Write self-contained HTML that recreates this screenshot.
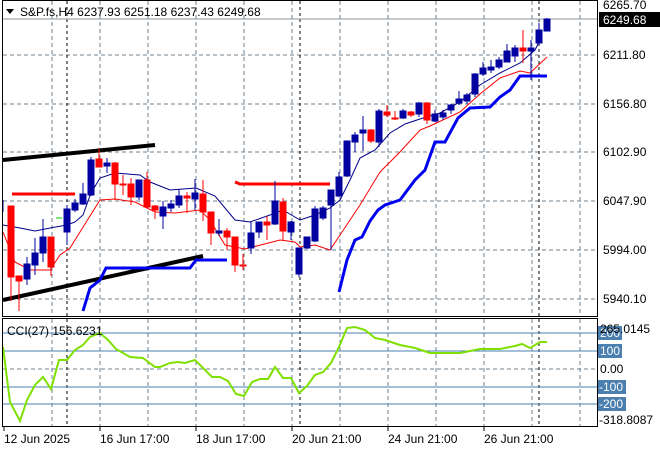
<!DOCTYPE html>
<html><head><meta charset="utf-8"><style>
html,body{margin:0;padding:0;background:#fff;width:660px;height:450px;overflow:hidden}
svg{display:block;font-family:"Liberation Sans","DejaVu Sans",sans-serif}
</style></head><body>
<svg width="660" height="450" viewBox="0 0 660 450" xmlns="http://www.w3.org/2000/svg">
<rect width="660" height="450" fill="#fff"/>
<g stroke="#6f7f8f" stroke-width="1" stroke-dasharray="4,3" fill="none">
<path d="M52,1V316M100,1V316M148,1V316M196,1V316M244,1V316M292,1V316M340,1V316M388,1V316M436,1V316M484,1V316M532,1V316M580,1V316"/>
<path d="M52,319V426M100,319V426M148,319V426M196,319V426M244,319V426M292,319V426M340,319V426M388,319V426M436,319V426M484,319V426M532,319V426M580,319V426"/>
<path d="M3,55H597M3,104H597M3,152H597M3,201H597M3,250H597M3,299H597M3,369H597"/>
</g>
<g stroke="#000" stroke-width="1" stroke-dasharray="3,3" fill="none">
<path d="M67,1V316M300,1V316M539,1V316M67,319V426M300,319V426M539,319V426"/>
</g>
<line x1="3" y1="19" x2="597" y2="19" stroke="#8a949e"/>
<path d="M3,333H597M3,351H597M3,387H597M3,404H597" stroke="#4a7fb0" fill="none"/>
<g stroke="#000" stroke-width="4"><line x1="3" y1="160" x2="155" y2="145"/><line x1="3" y1="300" x2="203" y2="256"/></g>
<g stroke="#f00" stroke-width="3" fill="none"><line x1="12" y1="194" x2="75" y2="194"/><polyline points="235,182 240,184 330,184"/></g>
<g stroke="#0000f0" stroke-width="3" fill="none">
<polyline points="83,311 90,288 100,280 106,268 190,268 196,260 227,260"/>
<polyline points="339,292 347,260 355,240 362,237 370,221 378,210 385,205 400,200 415,180 425,170 435,142 445,142 458,118 470,108 490,107 500,97 510,90 520,76 547,76"/>
</g>
<polyline fill="none" stroke="#00008b" stroke-width="1" points="3,225 20,228 35,231 50,228 67,225 75,222 83,215 91,193 100,178 115,173 140,175 150,182 170,190 196,188 215,196 235,220 250,222 270,215 283,210 300,220 315,215 330,208 340,200 350,180 360,158 375,150 390,133 405,124 420,119 440,113 460,102 480,85 500,73 520,63 535,50 541,38"/>
<polyline fill="none" stroke="#f00" stroke-width="1" points="3,232 15,262 30,270 50,270 60,255 70,248 80,232 100,200 115,199 135,202 155,212 175,213 200,210 210,220 225,245 245,249 280,240 295,242 300,247 315,245 330,250 340,235 360,205 380,172 400,152 420,130 430,126 460,112 480,94 500,78 520,71 530,73 547,57"/>
<line x1="56" y1="218" x2="62" y2="218" stroke="#0c0"/>
<g stroke="#f00" fill="#f00">
<line x1="11" y1="206" x2="11" y2="301"/><rect x="8" y="206" width="6" height="71"/>
<line x1="19" y1="276" x2="19" y2="311"/><rect x="16" y="276" width="6" height="5"/>
<line x1="51" y1="237" x2="51" y2="276"/><rect x="48" y="237" width="6" height="30"/>
<line x1="99" y1="148" x2="99" y2="167"/><rect x="96" y="159" width="6" height="8"/>
<line x1="115" y1="162" x2="115" y2="200"/><rect x="112" y="163" width="6" height="21"/>
<line x1="123" y1="175" x2="123" y2="195"/><rect x="120" y="184" width="6" height="1"/>
<line x1="131" y1="178" x2="131" y2="205"/><rect x="128" y="184" width="6" height="13"/>
<line x1="147" y1="172" x2="147" y2="208"/><rect x="144" y="180" width="6" height="27"/>
<line x1="155" y1="205" x2="155" y2="219"/><rect x="152" y="206" width="6" height="4"/>
<line x1="187" y1="192" x2="187" y2="213"/><rect x="184" y="196" width="6" height="2"/>
<line x1="203" y1="180" x2="203" y2="221"/><rect x="200" y="194" width="6" height="18"/>
<line x1="211" y1="212" x2="211" y2="245"/><rect x="208" y="212" width="6" height="21"/>
<line x1="227" y1="228" x2="227" y2="250"/><rect x="224" y="231" width="6" height="6"/>
<line x1="235" y1="237" x2="235" y2="272"/><rect x="232" y="237" width="6" height="28"/>
<line x1="243" y1="254" x2="243" y2="270"/><rect x="240" y="265" width="6" height="1"/>
<line x1="267" y1="216" x2="267" y2="240"/><rect x="264" y="222" width="6" height="3"/>
<line x1="283" y1="198" x2="283" y2="241"/><rect x="280" y="202" width="6" height="29"/>
<line x1="371" y1="129" x2="371" y2="143"/><rect x="368" y="130" width="6" height="11"/>
<line x1="387" y1="105" x2="387" y2="117"/><rect x="384" y="112" width="6" height="3"/>
<line x1="395" y1="111" x2="395" y2="120"/><rect x="392" y="118" width="6" height="1"/>
<line x1="411" y1="111" x2="411" y2="117"/><rect x="408" y="112" width="6" height="3"/>
<line x1="427" y1="102" x2="427" y2="124"/><rect x="424" y="103" width="6" height="17"/>
<line x1="523" y1="30" x2="523" y2="63"/><rect x="520" y="48" width="6" height="3"/>
</g>
<g stroke="#0000a0" fill="#0000a0">
<line x1="3" y1="200" x2="3" y2="212"/>
<line x1="27" y1="257" x2="27" y2="285"/><rect x="24" y="264" width="6" height="15"/>
<line x1="35" y1="238" x2="35" y2="275"/><rect x="32" y="253" width="6" height="12"/>
<line x1="43" y1="219" x2="43" y2="262"/><rect x="40" y="237" width="6" height="16"/>
<line x1="67" y1="205" x2="67" y2="245"/><rect x="64" y="209" width="6" height="23"/>
<line x1="75" y1="199" x2="75" y2="212"/><rect x="72" y="203" width="6" height="7"/>
<line x1="83" y1="183" x2="83" y2="205"/><rect x="80" y="194" width="6" height="10"/>
<line x1="91" y1="157" x2="91" y2="196"/><rect x="88" y="160" width="6" height="35"/>
<line x1="107" y1="158" x2="107" y2="173"/><rect x="104" y="163" width="6" height="3"/>
<line x1="139" y1="180" x2="139" y2="200"/><rect x="136" y="180" width="6" height="17"/>
<line x1="163" y1="201" x2="163" y2="229"/><rect x="160" y="207" width="6" height="9"/>
<line x1="171" y1="200" x2="171" y2="212"/><rect x="168" y="204" width="6" height="4"/>
<line x1="179" y1="189" x2="179" y2="208"/><rect x="176" y="196" width="6" height="9"/>
<line x1="195" y1="179" x2="195" y2="210"/><rect x="192" y="193" width="6" height="6"/>
<line x1="219" y1="219" x2="219" y2="236"/><rect x="216" y="231" width="6" height="2"/>
<line x1="251" y1="222" x2="251" y2="254"/><rect x="248" y="233" width="6" height="15"/>
<line x1="259" y1="222" x2="259" y2="238"/><rect x="256" y="222" width="6" height="10"/>
<line x1="275" y1="181" x2="275" y2="225"/><rect x="272" y="201" width="6" height="23"/>
<line x1="291" y1="221" x2="291" y2="240"/><rect x="288" y="222" width="6" height="10"/>
<line x1="299" y1="248" x2="299" y2="277"/><rect x="296" y="248" width="6" height="26"/>
<line x1="307" y1="237" x2="307" y2="249"/><rect x="304" y="237" width="6" height="11"/>
<line x1="315" y1="206" x2="315" y2="242"/><rect x="312" y="209" width="6" height="32"/>
<line x1="323" y1="206" x2="323" y2="220"/><rect x="320" y="208" width="6" height="10"/>
<line x1="331" y1="190" x2="331" y2="250"/><rect x="328" y="190" width="6" height="15"/>
<line x1="339" y1="172" x2="339" y2="197"/><rect x="336" y="177" width="6" height="19"/>
<line x1="347" y1="141" x2="347" y2="177"/><rect x="344" y="141" width="6" height="35"/>
<line x1="355" y1="132" x2="355" y2="152"/><rect x="352" y="135" width="6" height="7"/>
<line x1="363" y1="116" x2="363" y2="151"/><rect x="360" y="130" width="6" height="3"/>
<line x1="379" y1="109" x2="379" y2="147"/><rect x="376" y="111" width="6" height="31"/>
<line x1="403" y1="109" x2="403" y2="119"/><rect x="400" y="111" width="6" height="7"/>
<line x1="419" y1="102" x2="419" y2="117"/><rect x="416" y="103" width="6" height="11"/>
<line x1="435" y1="110" x2="435" y2="122"/><rect x="432" y="114" width="6" height="7"/>
<line x1="443" y1="110" x2="443" y2="120"/><rect x="440" y="113" width="6" height="4"/>
<line x1="451" y1="104" x2="451" y2="114"/><rect x="448" y="105" width="6" height="5"/>
<line x1="459" y1="91" x2="459" y2="105"/><rect x="456" y="99" width="6" height="4"/>
<line x1="467" y1="93" x2="467" y2="104"/><rect x="464" y="95" width="6" height="6"/>
<line x1="475" y1="73" x2="475" y2="97"/><rect x="472" y="74" width="6" height="20"/>
<line x1="483" y1="62" x2="483" y2="76"/><rect x="480" y="68" width="6" height="6"/>
<line x1="491" y1="60" x2="491" y2="73"/><rect x="488" y="67" width="6" height="3"/>
<line x1="499" y1="57" x2="499" y2="69"/><rect x="496" y="60" width="6" height="7"/>
<line x1="507" y1="44" x2="507" y2="62"/><rect x="504" y="51" width="6" height="11"/>
<line x1="515" y1="45" x2="515" y2="62"/><rect x="512" y="48" width="6" height="8"/>
<line x1="531" y1="40" x2="531" y2="80"/><rect x="528" y="48" width="6" height="3"/>
<line x1="539" y1="23" x2="539" y2="44"/><rect x="536" y="30" width="6" height="13"/>
<line x1="547" y1="18" x2="547" y2="31"/><rect x="544" y="19" width="6" height="12"/>
</g>
<polyline fill="none" stroke="#7fe000" stroke-width="2" points="3,347 10,402 20,421 27,400 35,385 43,377 51,389 59,360 67,360 75,350 83,345 90,337 100,333 108,340 116,349 130,357 143,358 155,367 160,367 170,363 178,362 185,363 195,360 203,368 212,377 220,377 228,381 236,394 244,396 252,382 260,379 268,379 275,367 283,378 291,378 299,393 307,386 315,375 323,372 331,363 339,347 347,328 355,327 365,330 375,338 385,340 400,345 415,348 430,353 460,353 480,349 500,349 515,346 522,344 530,348 540,342 547,342"/>
<g fill="none" stroke="#000" stroke-width="1">
<rect x="2.5" y="0.5" width="595" height="316"/>
<rect x="2.5" y="318.5" width="595" height="108"/>
</g>
<path d="M6,9 L14,9 L10,14 Z" fill="#000"/>
<text x="20" y="16" font-size="12" fill="#000">S&amp;P.fs,H4  6237.93 6251.18 6237.43 6249.68</text>
<text x="7" y="335" font-size="12" fill="#000">CCI(27) 156.6231</text>
<g font-size="12" fill="#000">
<text x="603" y="9">6265.70</text>
<text x="603" y="59">6211.80</text>
<text x="603" y="108">6156.80</text>
<text x="603" y="156">6102.90</text>
<text x="603" y="205">6047.90</text>
<text x="603" y="254">5994.00</text>
<text x="603" y="303">5940.10</text>
</g>
<rect x="599" y="12" width="61" height="15" fill="#000"/>
<text x="603" y="24" font-size="12" fill="#fff">6249.68</text>
<g fill="#4a7fb0"><rect x="598" y="326" width="24" height="14"/><rect x="598" y="344" width="24" height="14"/><rect x="598" y="380" width="28" height="14"/><rect x="598" y="397" width="28" height="14"/></g>
<g font-size="12">
<text x="600" y="337" fill="#fff">200</text><text x="600" y="355" fill="#fff">100</text>
<text x="599" y="391" fill="#fff">-100</text><text x="599" y="408" fill="#fff">-200</text>
<text x="600" y="373" fill="#000">0.00</text>
<text x="600" y="333" fill="#000">265.0145</text>
<text x="599" y="424" fill="#000">-318.8087</text>
</g>
<g font-size="12" fill="#000">
<text x="4" y="443">12 Jun 2025</text>
<text x="100" y="443">16 Jun 17:00</text>
<text x="196" y="443">18 Jun 17:00</text>
<text x="292" y="443">20 Jun 21:00</text>
<text x="388" y="443">24 Jun 21:00</text>
<text x="484" y="443">26 Jun 21:00</text>
</g>
<path d="M4,427V431M100,427V431M196,427V431M292,427V431M388,427V431M484,427V431" stroke="#000"/>
</svg>
</body></html>
